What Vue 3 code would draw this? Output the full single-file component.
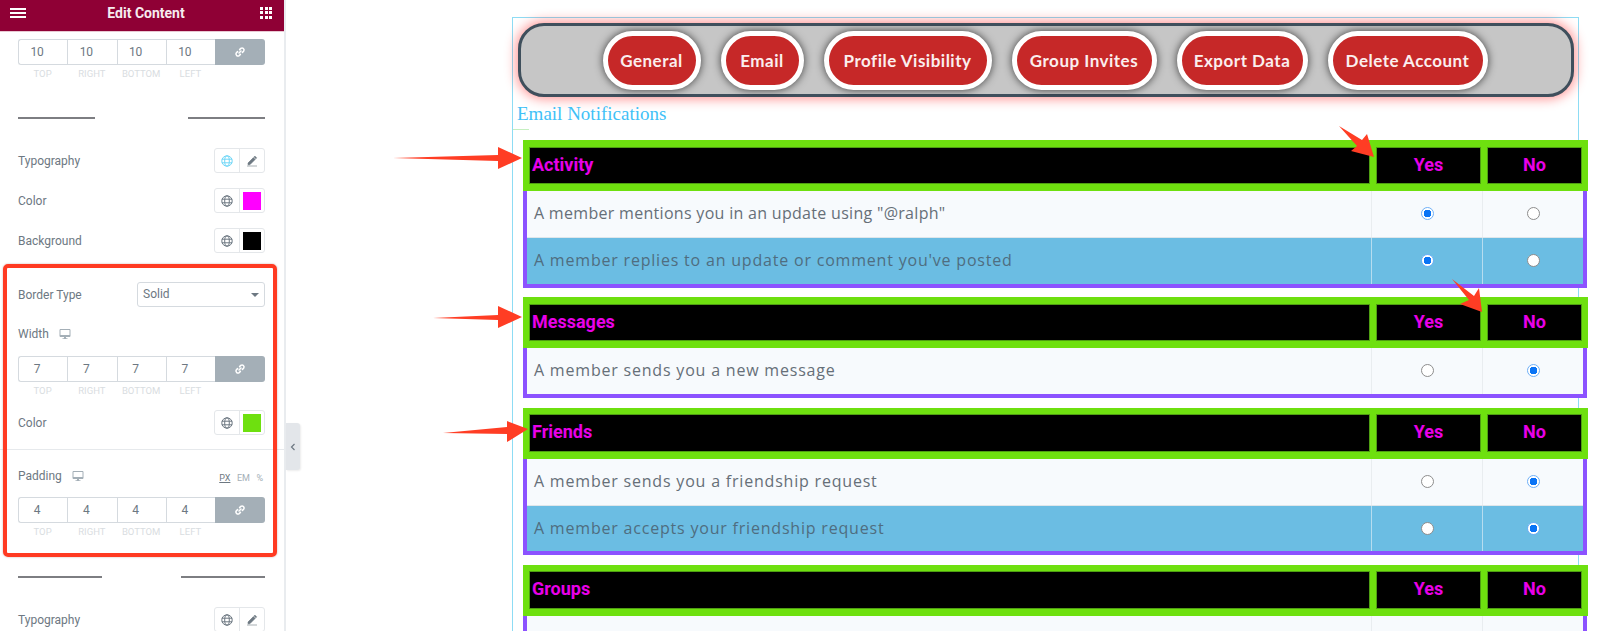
<template>
  <div class="page">
    <aside class="panel">
      <header class="panel-head">
        <span class="burger"><i></i><i></i><i></i></span>
        <span class="panel-title">Edit Content</span>
        <span class="apps"><i v-for="n in 9" :key="n"></i></span>
      </header>

      <div class="dims first">
        <div v-for="l in sides" :key="l" class="dim"><span class="dim-val">10</span><span class="dim-lab">{{ l }}</span></div>
        <div class="dim link-col"><span class="link"><svg viewBox="0 0 12 12" width="12" height="12"><path d="M5 7l2-2M3.6 5.6L2.4 6.8a2 2 0 0 0 2.8 2.8l1.2-1.2M5.6 3.6l1.2-1.2a2 2 0 0 1 2.8 2.8L8.4 6.4" fill="none" stroke="#fff" stroke-width="1.5" stroke-linecap="round"/></svg></span></div>
      </div>

      <div class="rule rule-a"><i></i><i></i></div>

      <div class="ctl ctl-type">
        <span>Typography</span>
        <div class="pair">
          <span class="seg"><svg class="globe active" viewBox="0 0 12 12"><use href="#globe-shape"/></svg></span>
          <span class="seg"><svg class="pen" viewBox="0 0 12 12"><path d="M2 8l5.4-5.4 1.8 1.8L3.8 9.8H2zM8.1 1.9l.8-.8 1.8 1.8-.8.8zM1 11h10" fill="#6d7882" stroke="#6d7882" stroke-width=".6"/></svg></span>
        </div>
      </div>
      <div class="ctl gap16">
        <span>Color</span>
        <div class="pair">
          <span class="seg"><svg class="globe" viewBox="0 0 12 12"><use href="#globe-shape"/></svg></span>
          <span class="seg"><b class="swatch" style="background:#ff00ff"></b></span>
        </div>
      </div>
      <div class="ctl gap16">
        <span>Background</span>
        <div class="pair">
          <span class="seg"><svg class="globe" viewBox="0 0 12 12"><use href="#globe-shape"/></svg></span>
          <span class="seg"><b class="swatch" style="background:#000"></b></span>
        </div>
      </div>

      <div class="ctl border-type">
        <span>Border Type</span>
        <div class="select">Solid<i class="caret"></i></div>
      </div>

      <div class="label-row width-row">
        <span>Width</span>
        <svg class="monitor" viewBox="0 0 12 12"><use href="#monitor-shape"/></svg>
      </div>
      <div class="dims mid">
        <div v-for="l in sides" :key="l" class="dim"><span class="dim-val">7</span><span class="dim-lab">{{ l }}</span></div>
        <div class="dim link-col"><span class="link"><svg viewBox="0 0 12 12" width="12" height="12"><path d="M5 7l2-2M3.6 5.6L2.4 6.8a2 2 0 0 0 2.8 2.8l1.2-1.2M5.6 3.6l1.2-1.2a2 2 0 0 1 2.8 2.8L8.4 6.4" fill="none" stroke="#fff" stroke-width="1.5" stroke-linecap="round"/></svg></span></div>
      </div>

      <div class="ctl color-row">
        <span>Color</span>
        <div class="pair">
          <span class="seg"><svg class="globe" viewBox="0 0 12 12"><use href="#globe-shape"/></svg></span>
          <span class="seg"><b class="swatch" style="background:#6ee00f"></b></span>
        </div>
      </div>

      <div class="full-line"></div>

      <div class="label-row padding-row">
        <span>Padding</span>
        <svg class="monitor" viewBox="0 0 12 12"><use href="#monitor-shape"/></svg>
        <span class="units"><u>PX</u><em>EM</em><em>%</em></span>
      </div>
      <div class="dims pad">
        <div v-for="l in sides" :key="l" class="dim"><span class="dim-val">4</span><span class="dim-lab">{{ l }}</span></div>
        <div class="dim link-col"><span class="link"><svg viewBox="0 0 12 12" width="12" height="12"><path d="M5 7l2-2M3.6 5.6L2.4 6.8a2 2 0 0 0 2.8 2.8l1.2-1.2M5.6 3.6l1.2-1.2a2 2 0 0 1 2.8 2.8L8.4 6.4" fill="none" stroke="#fff" stroke-width="1.5" stroke-linecap="round"/></svg></span></div>
      </div>

      <div class="rule rule-b"><i></i><i></i></div>

      <div class="ctl ctl-last">
        <span>Typography</span>
        <div class="pair">
          <span class="seg"><svg class="globe" viewBox="0 0 12 12"><use href="#globe-shape"/></svg></span>
          <span class="seg"><svg class="pen" viewBox="0 0 12 12"><path d="M2 8l5.4-5.4 1.8 1.8L3.8 9.8H2zM8.1 1.9l.8-.8 1.8 1.8-.8.8zM1 11h10" fill="#6d7882" stroke="#6d7882" stroke-width=".6"/></svg></span>
        </div>
      </div>

      <div class="red-box"></div>
      <div class="collapse">
        <svg viewBox="0 0 8 10" width="8" height="10"><path d="M5.5 2L2.5 5l3 3" fill="none" stroke="#6d7882" stroke-width="1.2"/></svg>
      </div>
    </aside>

    <main class="frame">
      <nav class="tabs">
        <a v-for="t in tabs" :key="t" class="tab">{{ t }}</a>
      </nav>
      <h2 class="heading">Email Notifications</h2>
      <div class="heading-line"></div>

      <section v-for="g in groups" :key="g.name" class="group">
        <div class="group-head">
          <div class="cell-name">{{ g.name }}</div>
          <div class="cell-opt">Yes</div>
          <div class="cell-opt">No</div>
        </div>
        <div class="group-body">
          <div v-for="(r, i) in g.rows" :key="i" class="row" :class="{ alt: i % 2 }">
            <div class="row-text">{{ r.text }}</div>
            <div class="row-opt"><span v-if="r.text" class="radio" :class="{ on: r.yes }"></span></div>
            <div class="row-opt"><span v-if="r.text" class="radio" :class="{ on: !r.yes }"></span></div>
          </div>
        </div>
      </section>
    </main>

    <svg class="arrows" width="1600" height="631" viewBox="0 0 1600 631">
      <defs>
        <g id="globe-shape" fill="none" stroke="currentColor" stroke-width="1">
          <circle cx="6" cy="6" r="5.2"/>
          <ellipse cx="6" cy="6" rx="2.3" ry="5.2"/>
          <path d="M.8 4.2h10.4M.8 7.8h10.4"/>
        </g>
        <g id="monitor-shape">
          <path d="M1 1.5h10v7H1z" fill="#fff" stroke="#a4afb7" stroke-width="1"/>
          <path d="M1 7h10v1.5H1zM5 9h2v1.2H5zM3.5 10.2h5v.8h-5z" fill="#a4afb7"/>
        </g>
      </defs>
      <polygon v-for="(a, i) in arrows" :key="i" :points="a" fill="#ff3d24"/>
    </svg>
  </div>
</template>

<script setup>
const sides = ['Top', 'Right', 'Bottom', 'Left']
const tabs = ['General', 'Email', 'Profile Visibility', 'Group Invites', 'Export Data', 'Delete Account']

const groups = [
  {
    name: 'Activity',
    rows: [
      { text: 'A member mentions you in an update using "@ralph"', yes: true },
      { text: "A member replies to an update or comment you've posted", yes: true }
    ]
  },
  {
    name: 'Messages',
    rows: [{ text: 'A member sends you a new message', yes: false }]
  },
  {
    name: 'Friends',
    rows: [
      { text: 'A member sends you a friendship request', yes: false },
      { text: 'A member accepts your friendship request', yes: false }
    ]
  },
  {
    name: 'Groups',
    rows: [{ text: '', yes: true }]
  }
]

// annotation arrows drawn over the page
const arrows = [
  '393,158 498,155 498,147 522,158 498,169 498,161',
  '433,318 498,315 498,306 522,317 498,328 498,320',
  '443,433 507,427 507,421 528,429 507,442 507,434',
  '1339,126 1362,140 1367,134 1374,157 1351,151 1357,146',
  '1452,279 1474,296 1479,288 1482,312 1460,304 1469,300'
]
</script>

<style>
html, body { margin: 0; background: #fff; overflow: hidden; }
</style>

<style scoped>
.page { position: relative; width: 1600px; height: 631px; overflow: hidden; display: flex; background: #fff; font-family: Roboto, sans-serif; }

.panel { position: relative; flex: 0 0 284px; height: 631px; box-sizing: content-box; border-right: 2px solid #e9ecef; color: #6d7882; font-size: 12px; }
.panel-head { height: 32px; background: #8f0035; border-bottom: 1px solid #e8c8d2; box-sizing: border-box; display: flex; align-items: center; justify-content: space-between; padding: 0 12px 6px 10px; color: #fff; }
.panel-title { font-size: 14px; font-weight: 700; margin-left: 6px; opacity: .92; }
.burger { display: flex; flex-direction: column; gap: 2px; width: 16px; }
.burger i { height: 2px; background: #fff; display: block; }
.apps { display: grid; grid-template-columns: repeat(3, 3px); grid-auto-rows: 3px; gap: 1.5px; }
.apps i { background: #fff; }

.dims { display: grid; grid-template-columns: repeat(4, 49.25px) 50px; margin: 0 19px 0 18px; height: 44px; }
.dims.first { margin-top: 7px; }
.dims.mid { margin-top: 14px; }
.dims.pad { margin-top: 13px; }
.dim { display: flex; flex-direction: column; }
.dim-val { height: 26px; box-sizing: border-box; border: 1px solid #d5dadf; border-right-width: 0; line-height: 24px; padding-right: 12px; text-align: center; font-size: 12px; color: #6d7882; background: #fff; }
.dim:first-child .dim-val { border-radius: 3px 0 0 3px; }
.dim-lab { height: 18px; line-height: 18px; text-align: center; font-size: 9.5px; text-transform: uppercase; color: #d9dde1; }
.link { height: 26px; background: #a4afb7; border-radius: 0 3px 3px 0; display: flex; align-items: center; justify-content: center; }

.rule { display: flex; justify-content: space-between; margin: 0 19px 0 18px; height: 2px; }
.rule i { height: 2px; background: #7d7e82; display: block; }
.rule-a { margin-top: 34px; }
.rule-a i { width: 77px; }
.rule-b { margin-top: 35px; }
.rule-b i { width: 84px; }

.ctl { display: flex; align-items: center; justify-content: space-between; margin: 0 19px 0 18px; height: 25px; }
.ctl-type { margin-top: 29px; }
.gap16 { margin-top: 15px; }
.border-type { margin-top: 29px; }
.color-row { margin-top: 10px; }
.ctl-last { margin-top: 29px; }
.pair { display: flex; width: 51px; height: 25px; box-sizing: border-box; border: 1px solid #e4e7ea; border-radius: 3px; }
.seg { flex: 1; display: flex; align-items: center; justify-content: center; }
.seg + .seg { border-left: 1px solid #e4e7ea; }
.globe { width: 12px; height: 12px; color: #6d7882; }
.globe.active { color: #71d7f7; }
.pen { width: 12px; height: 12px; }
.swatch { width: 18px; height: 18px; display: block; }

.select { position: relative; width: 128px; height: 25px; box-sizing: border-box; border: 1px solid #d5dadf; border-radius: 3px; line-height: 23px; padding-left: 5px; color: #6d7882; }
.caret { position: absolute; right: 5px; top: 10px; border: 4px solid transparent; border-top: 4px solid #6d7882; }

.label-row { display: flex; align-items: center; gap: 10px; margin: 0 19px 0 18px; height: 16px; }
.width-row { margin-top: 19px; }
.padding-row { margin-top: 18px; }
.monitor { width: 12px; height: 12px; }
.units { margin-left: auto; display: flex; gap: 6.5px; font-size: 9px; color: #a4afb7; padding-right: 2px; padding-top: 3px; }
.units u { color: #6d7882; }
.units em { font-style: normal; }

.full-line { height: 1px; background: #e6e9ec; margin-top: 14px; }

.red-box { position: absolute; left: 3px; top: 264px; width: 274px; height: 293px; box-sizing: border-box; border: 4px solid #ff3a22; border-radius: 5px; box-shadow: 0 0 2px rgba(120, 40, 30, .4); }
.collapse { position: absolute; left: 286px; top: 423px; width: 14px; height: 47px; background: #e3e6ea; border-radius: 0 3px 3px 0; display: flex; align-items: center; justify-content: center; box-shadow: 1px 1px 2px rgba(0, 0, 0, .08); }

.frame { flex: none; margin: 17px 0 0 226px; width: 1065px; height: 640px; border: 1px solid #8ddcf4; border-bottom: 0; }

.tabs { box-sizing: border-box; width: 1056px; height: 74px; margin: 5px 0 0 5px; padding-right: 2px; background: #c6c6c6; border: 3px solid #3f4f5c; border-radius: 26px; box-shadow: 0 0 12px 2px rgba(255, 0, 0, .42); display: flex; align-items: center; justify-content: center; gap: 20px; }
.tab { box-sizing: border-box; height: 59px; display: flex; align-items: center; justify-content: center; border: 5px solid #fff; border-radius: 30px; background: #c62828; box-shadow: 0 0 8px rgba(0, 0, 0, .7); color: #fbeeee; font: 700 17px Lato, sans-serif; letter-spacing: .5px; white-space: nowrap; }
.tab:nth-child(1) { width: 98px; }
.tab:nth-child(2) { width: 83px; }
.tab:nth-child(3) { width: 168px; }
.tab:nth-child(4) { width: 145px; }
.tab:nth-child(5) { width: 131px; }
.tab:nth-child(6) { width: 160px; }

.heading { margin: 6px 0 0 4px; height: 22px; font: 400 19px/22px "Liberation Serif", serif; color: #3fc1f7; }
.heading-line { width: 16px; height: 1px; background: #c5efc0; margin-top: 4px; }

.group { width: 1065px; margin: 10px 0 0 10px; }
.group + .group { margin-top: 9.5px; }
.group-head { box-sizing: border-box; height: 51px; background: #6ee00f; padding: 6.5px 6px 7px 6px; display: grid; grid-template-columns: 841px 105px 95px; column-gap: 6px; }
.cell-name, .cell-opt { background: #000; border: 1px solid #4f9e12; box-sizing: border-box; color: #e800e8; font: 700 18px/34px Roboto, sans-serif; }
.cell-name { padding-left: 2px; }
.cell-opt { text-align: center; }
.group-body { box-sizing: border-box; width: 1064px; border: 4px solid #8c52ff; border-top: 0; }
.row { height: 46.25px; display: grid; grid-template-columns: 844px 111px 101px; background: #f7fafd; box-sizing: border-box; }
.row.alt { background: #6bbde3; border-top: 1px solid #dfe6ea; }
.row-text { padding-left: 7px; font: 400 16px/45px "Open Sans", sans-serif; letter-spacing: .8px; color: #666f78; white-space: nowrap; }
.group:nth-of-type(1) .row:first-child .row-text { letter-spacing: .3px; }
.row.alt .row-text { color: #4f6d80; }
.row-opt { border-left: 1px solid #e9edf0; display: flex; align-items: center; justify-content: center; padding-bottom: 1px; }
.row.alt .row-opt { border-left-color: #b7ddef; }

.radio { box-sizing: border-box; width: 13px; height: 13px; border-radius: 50%; background: #fff; border: 1px solid #8d8d8d; }
.radio.on { border: 1.5px solid #6fb0f7; background: radial-gradient(circle, #0a74f5 0 3.6px, #fff 4px); }

.arrows { position: absolute; left: 0; top: 0; pointer-events: none; }
</style>
